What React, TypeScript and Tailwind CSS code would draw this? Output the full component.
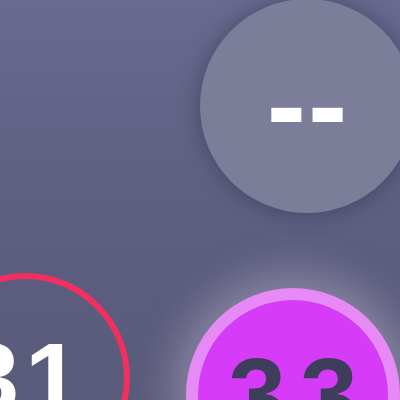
import React from 'react';

export default function App() {
  return (
    <div className="relative w-[400px] h-[400px] overflow-hidden bg-gradient-to-b from-[#686b8f] via-[#5e5f81] to-[#5a5a7a] font-['Liberation_Sans',Arial,sans-serif]">
      {/* score pending */}
      <div className="absolute left-[200px] top-[-1px] w-[214px] h-[214px] rounded-full bg-[#7c7d98] shadow-[0_0_18px_4px_rgba(40,40,70,0.35)] flex items-center justify-center">
        <span className="text-white font-bold text-[118px] leading-none tracking-[2px] mt-[-2px] ml-[2px]">--</span>
      </div>

      {/* opponent ring */}
      <div className="absolute left-[-80px] top-[273px] w-[210px] h-[210px] rounded-full border-[6px] border-[#f2305f] flex items-center justify-center">
        <span className="text-white font-bold text-[100px] leading-none tracking-[6px]">31</span>
      </div>

      {/* active player */}
      <div className="absolute left-[186px] top-[288px] w-[214px] h-[214px] rounded-full bg-[#d63cf7] border-[12px] border-[#e68af6] shadow-[0_0_40px_14px_rgba(220,210,235,0.35)] flex items-center justify-center">
        <span className="text-[#3e3e5c] font-bold text-[104px] leading-none tracking-[14px] ml-[14px]">33</span>
      </div>
    </div>
  );
}
